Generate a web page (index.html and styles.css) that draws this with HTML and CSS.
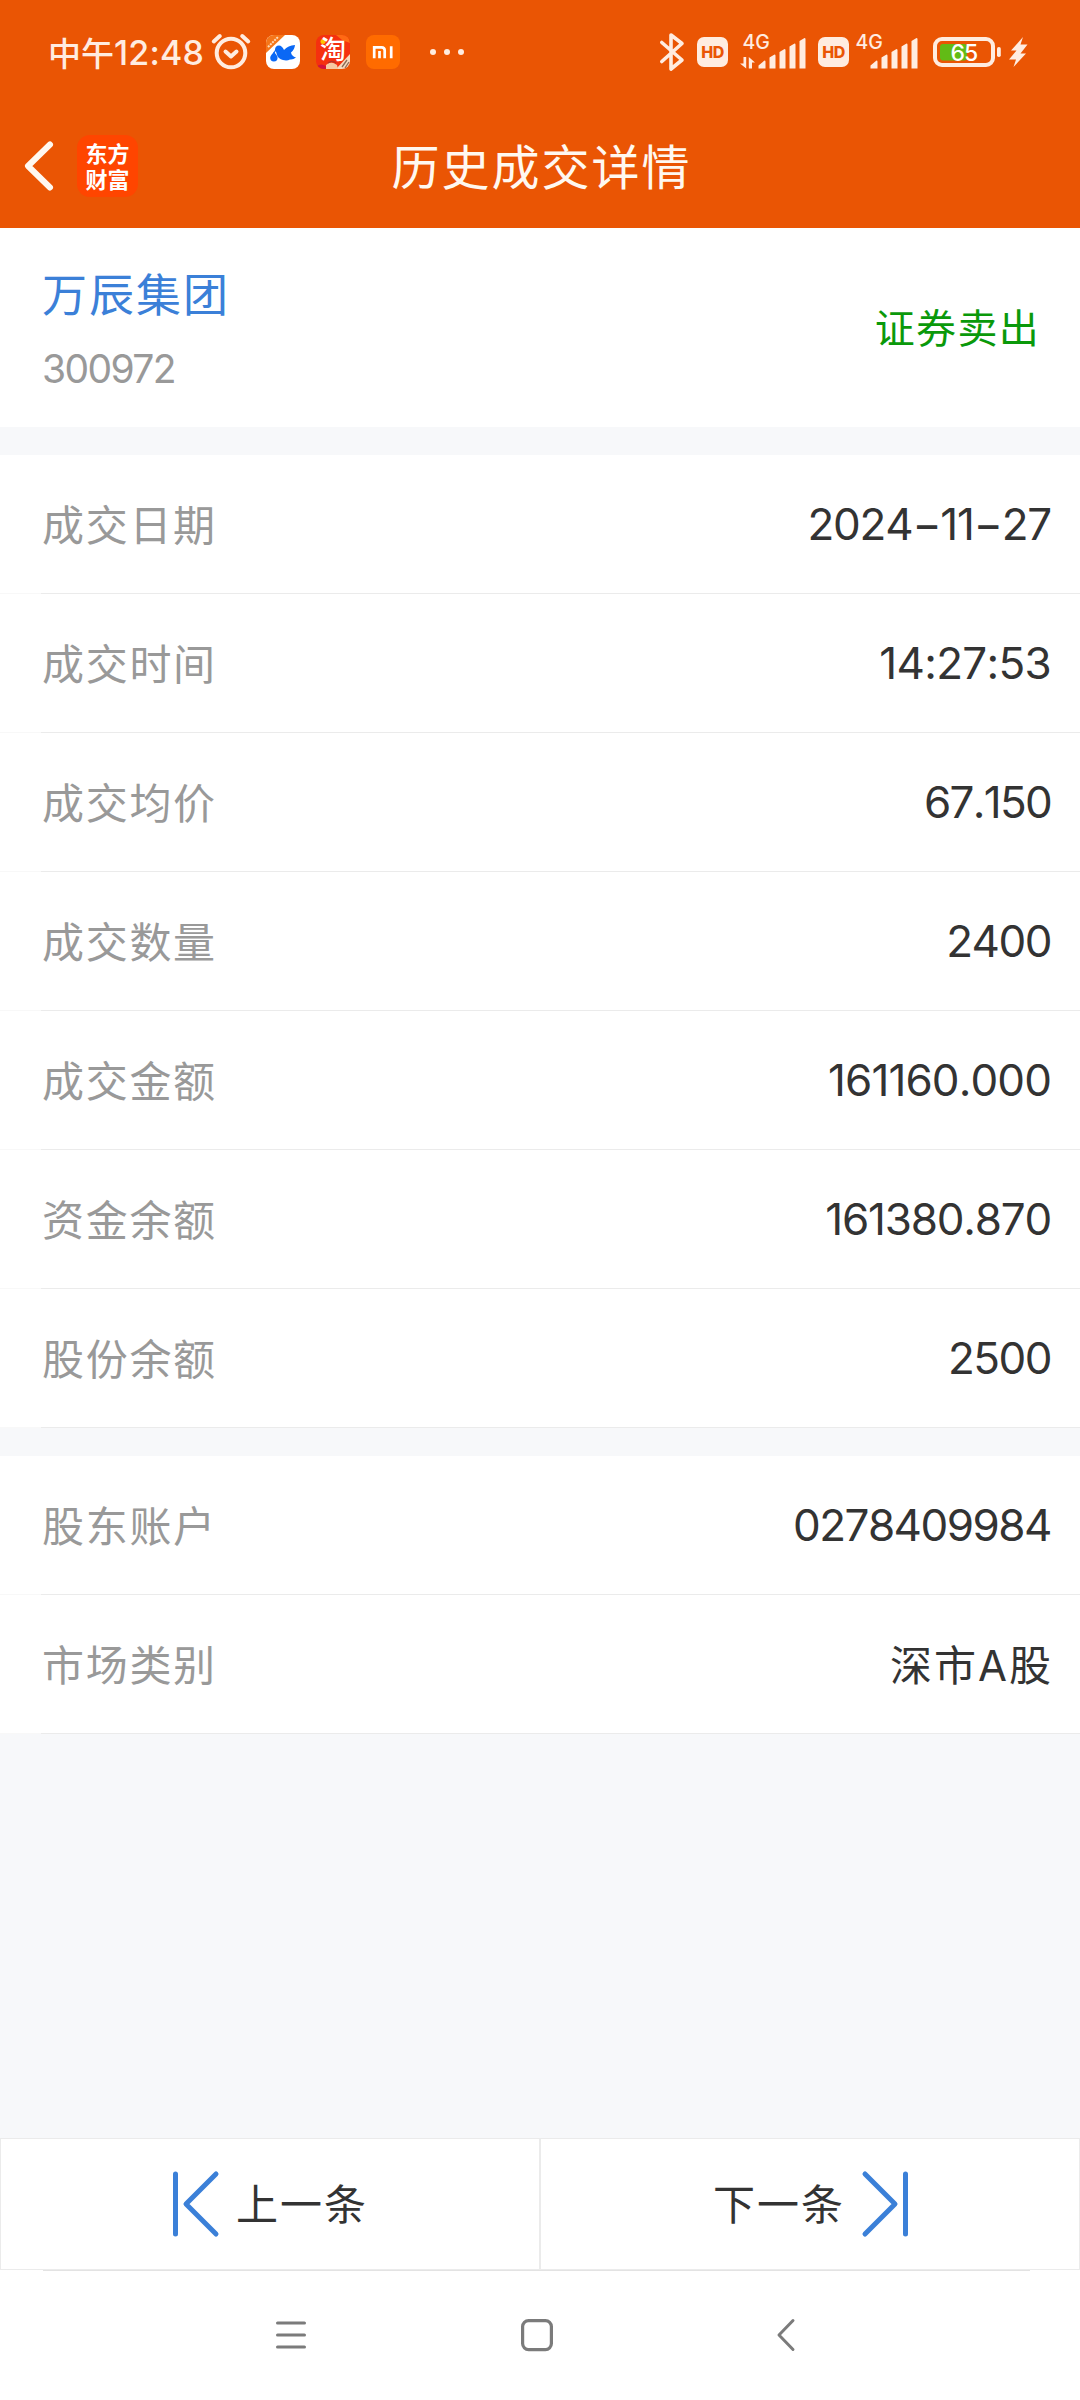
FILE: index.html
```html
<!DOCTYPE html>
<html lang="zh-CN">
<head>
    <meta charset="UTF-8">
    <meta name="viewport" content="width=device-width, initial-scale=1.0">
    <title>历史成交详情</title>
    <link rel="stylesheet" href="styles.css">
</head>
<body>

<div class="status-bar">
    <div class="status-left">
        <span class="time"><span class="time-cn">中午</span><span class="time-num">12:48</span></span>
        <svg class="alarm" width="40" height="40" viewBox="0 0 40 40" fill="none" stroke="#ffece0" stroke-width="4" stroke-linecap="round" stroke-linejoin="round">
            <circle cx="20" cy="21" r="14.3"/>
            <path d="M14.5 19.5l5.5 5 5.5-5"/>
            <path d="M2.8 9.5l6-5.5M37.2 9.5l-6-5.5"/>
        </svg>
        <svg class="app-icon" width="34" height="34" viewBox="0 0 34 34">
            <clipPath id="round"><rect width="34" height="34" rx="8"/></clipPath>
            <g clip-path="url(#round)">
                <rect width="34" height="34" fill="#fff"/>
                <path d="M0 0h19L0 18z" fill="#f5761a"/>
                <path d="M2 12L12 2" stroke="#ffd9b8" stroke-width="2" stroke-dasharray="2 1"/>
            </g>
            <path d="M9 15q0-4.500 4-4.500 3 0 5 4.500 4-4.500 11-5-.5 5-4 7.500.5 3.500 5 5-3 2.500-6 2-3 1.500-7 .5-5-1.500-6-5-.5-3-2-5z" fill="#0a68f5"/>
            <path d="M10 14.500L8 18" stroke="#0a68f5" stroke-width="1.300"/>
            <path d="M8 16.500c-1.500 2.500-3.800 4-3.800 6.200a3.700 3.700 0 0 0 7.400 0c0-2.200-2.200-3.700-3.600-6.200z" fill="#0a68f5"/>
        </svg>
        <svg class="app-icon" width="34" height="34" viewBox="0 0 34 34">
            <g clip-path="url(#round)">
                <rect width="34" height="34" fill="#f5300f"/>
                <path d="M20 0h12l2 8-8-3z" fill="#ff6a13"/>
                <path d="M34 19L20 34h14z" fill="#f7d9bd"/>
                <path d="M26 32l5-7M29 33l4-6" stroke="#8a6a55" stroke-width="1.300"/>
                <path d="M1 31q4-3 9 0v3H1z" fill="#d3123c"/>
                <path d="M10 30q5-5 11 0l1 4H10z" fill="#f6c9a2"/>
                <path d="M12 28q4-3 8 0" stroke="#b3342a" stroke-width="1.500" fill="none"/>
            </g>
            <circle cx="7" cy="6.500" r="2.500" fill="#ffc400"/>
            <text class="tao" x="4" y="24">淘</text>
        </svg>
        <svg class="app-icon" width="34" height="34" viewBox="0 0 34 34">
            <rect width="34" height="34" rx="8" fill="#ff6b00"/>
            <path d="M8.200 23.200V12.400h7.300q3.200 0 3.200 3.200v7.600M13.500 16v7.200M25.200 11.200v12" fill="none" stroke="#fff" stroke-width="2.700"/>
        </svg>
        <svg class="more" width="34" height="8" viewBox="0 0 34 8" fill="#ffece0">
            <circle cx="3" cy="4" r="3"/>
            <circle cx="17" cy="4" r="3"/>
            <circle cx="31" cy="4" r="3"/>
        </svg>
    </div>
    <div class="status-right">
        <svg width="24" height="40" viewBox="0 0 24 40" fill="none" stroke="#ffece0" stroke-width="3.600" stroke-linecap="round" stroke-linejoin="round">
            <path d="M1.800 10.500L22 28 11 37V3l11 8.500L1.800 29.500"/>
        </svg>
        <span class="hd">HD</span>
        <svg class="signal signal-1" width="66" height="40" viewBox="0 -2 66 40" fill="#ffece0">
            <text class="net" x="2.500" y="14.800">4G</text>
            <path d="M0 29.500h3.500V23h2.700v11.500L0 29.500zM8.800 34.500V23l6.200 5.500h-3v6z"/>
            <path d="M18.500 34.500v-3l6-5q1 0 1 1.200v6.800zM29.500 34.500V23.500l5-3q1 0 1 1.200v12.800zM39.500 34.500V18l5-3q1 0 1 1.200v18.300zM49.500 34.500V12.500l5-3q1 0 1 1.200v23.800zM59.500 34.500V7l5-3q1 0 1 1.200v29.300z"/>
        </svg>
        <span class="hd hd-2">HD</span>
        <svg class="signal signal-2" width="64" height="40" viewBox="0 -2 64 40" fill="#ffece0">
            <text class="net" x="0.500" y="14.800">4G</text>
            <path transform="translate(-3)" d="M18.500 34.500v-3l6-5q1 0 1 1.200v6.800zM29.500 34.500V23.500l5-3q1 0 1 1.200v12.800zM39.500 34.500V18l5-3q1 0 1 1.200v18.300zM49.500 34.500V12.500l5-3q1 0 1 1.200v23.800zM59.500 34.500V7l5-3q1 0 1 1.200v29.300z"/>
        </svg>
        <svg class="battery" width="68" height="32" viewBox="0 0 68 32">
            <rect x="2" y="3" width="58" height="26" rx="7" fill="none" stroke="#ffece0" stroke-width="4"/>
            <rect x="64" y="11" width="3.800" height="10" rx="1.800" fill="#ffece0"/>
            <rect x="7" y="8" width="27" height="16.500" rx="3" fill="#62bb16"/>
            <text class="level" x="17.500" y="25">65</text>
        </svg>
        <svg class="bolt" width="19" height="32" viewBox="0 0 19 32">
            <path d="M14 1L2 14.500h5.500L0 23.500h7L4.500 31 17 17.500h-5.500l7-9h-7z" fill="#ffece0"/>
        </svg>
    </div>
</div>

<div class="nav-bar">
    <div class="nav-side">
        <svg width="30" height="52" viewBox="0 0 30 52" fill="none" stroke="#fff8f0" stroke-width="6" stroke-linecap="round" stroke-linejoin="round">
            <path d="M26 4.500L4 26l22 21.500"/>
        </svg>
        <div class="logo">东方<br>财富</div>
    </div>
    <h1 class="title">历史成交详情</h1>
    <div class="nav-side"></div>
</div>

<div class="stock">
    <div>
        <div class="stock-name">万辰集团</div>
        <div class="stock-code">300972</div>
    </div>
    <div class="stock-type">证券卖出</div>
</div>

<div class="list">
    <div class="row"><span class="label">成交日期</span><span class="value v-date">2024−11−27</span></div>
    <div class="row"><span class="label">成交时间</span><span class="value v-time">14:27:53</span></div>
    <div class="row"><span class="label">成交均价</span><span class="value v-price">67.150</span></div>
    <div class="row"><span class="label">成交数量</span><span class="value">2400</span></div>
    <div class="row"><span class="label">成交金额</span><span class="value v-amount">161160.000</span></div>
    <div class="row"><span class="label">资金余额</span><span class="value v-balance">161380.870</span></div>
    <div class="row"><span class="label">股份余额</span><span class="value">2500</span></div>
</div>

<div class="list">
    <div class="row"><span class="label">股东账户</span><span class="value v-account">0278409984</span></div>
    <div class="row"><span class="label">市场类别</span><span class="value v-market">深市A股</span></div>
</div>

<div class="pager">
    <div class="pager-btn">
        <svg width="46" height="66" viewBox="0 0 46 66" fill="none" stroke="#3b80d8" stroke-width="5" stroke-linecap="round" stroke-linejoin="round">
            <path d="M2.500 3v60M43 3L13 33l30 30"/>
        </svg>
        <span class="pager-text">上一条</span>
    </div>
    <div class="pager-btn">
        <span class="pager-text">下一条</span>
        <svg width="46" height="66" viewBox="0 0 46 66" fill="none" stroke="#3b80d8" stroke-width="5" stroke-linecap="round" stroke-linejoin="round">
            <path d="M43.500 3v60M3 3l30 30L3 63"/>
        </svg>
    </div>
</div>

<div class="system-nav">
    <svg width="30" height="34" viewBox="0 0 30 34" stroke="#7b7b7b" stroke-width="3" stroke-linecap="round">
        <path d="M1.500 5h27M1.500 17h27M1.500 29h27"/>
    </svg>
    <svg class="home" width="32" height="34" viewBox="0 0 32 34" fill="none" stroke="#7b7b7b" stroke-width="3.200">
        <rect x="1.600" y="2.600" width="28.800" height="29" rx="6"/>
    </svg>
    <svg class="back" width="18" height="34" viewBox="0 0 18 34" fill="none" stroke="#7b7b7b" stroke-width="3" stroke-linecap="round" stroke-linejoin="round">
        <path d="M16 2.500L2 17l14 14.500"/>
    </svg>
</div>

</body>
</html>
```
FILE: styles.css
```css
* {
    box-sizing: border-box;
}
body {
    margin: 0;
    width: 1080px;
    height: 2400px;
    display: flex;
    flex-direction: column;
    background-color: #f7f8fa;
    font-family: Inter, "Noto Sans CJK SC", sans-serif;
    color: #333;
    overflow: hidden;
}
svg {
    display: block;
    flex: none;
    overflow: visible;
}

/* status bar */
.status-bar {
    height: 104px;
    padding: 0 52px 0 48px;
    display: flex;
    justify-content: space-between;
    background-color: #ea5504;
    color: #ffece0;
}
.status-left, .status-right {
    display: flex;
    align-items: center;
    height: 104px;
}
.time {
    width: 163px;
    display: flex;
    align-items: center;
    white-space: nowrap;
    font-weight: 500;
}
.time-cn {
    font-size: 33px;
}
.time-num {
    font-size: 34px;
    letter-spacing: 0.2px;
    padding-top: 1px;
}
.app-icon {
    margin-right: 16px;
}
.alarm {
    margin-right: 15px;
}
.more {
    margin-left: 14px;
}
.tao {
    font-size: 26px;
    font-weight: 500;
    fill: #fff;
}
.hd {
    width: 31px;
    height: 30px;
    margin-left: 13px;
    border-radius: 7px;
    background-color: #ffece0;
    color: #ea5504;
    font-size: 16px;
    font-weight: 800;
    line-height: 30px;
    letter-spacing: -0.5px;
    text-align: center;
}
.signal-1 {
    margin-left: 12px;
}
.hd-2 {
    margin-left: 12px;
}
.signal-2 {
    margin-left: 6px;
}
.net {
    font-size: 19.5px;
    font-weight: 500;
}
.battery {
    margin-left: 14px;
}
.level {
    font-size: 23px;
    font-weight: 500;
    letter-spacing: -1px;
    fill: #fff;
}
.bolt {
    margin-left: 8px;
}

/* title bar */
.nav-bar {
    height: 124px;
    padding: 0 24px;
    display: flex;
    align-items: center;
    background-color: #ea5504;
}
.nav-side {
    flex: 1;
    display: flex;
    align-items: center;
    gap: 23px;
}
.logo {
    width: 61px;
    height: 62px;
    padding-top: 4px;
    border-radius: 13px;
    background-color: #ff4500;
    color: #fff;
    font-family: "Noto Sans CJK SC", sans-serif;
    font-size: 22px;
    font-weight: 700;
    line-height: 26px;
    text-align: center;
}
.title {
    margin: 0 0 0 3px;
    padding-bottom: 4px;
    font-size: 48px;
    font-weight: 400;
    letter-spacing: 2px;
    color: #fff8f0;
}

/* stock header */
.stock {
    height: 199px;
    padding: 0 40px 0 42px;
    display: flex;
    justify-content: space-between;
    align-items: center;
    background-color: #fff;
}
.stock-name {
    margin-top: 4px;
    font-size: 45px;
    line-height: 66px;
    letter-spacing: 2px;
    color: #3b80d8;
}
.stock-code {
    margin-top: 12px;
    font-size: 39px;
    line-height: 56px;
    letter-spacing: -1.6px;
    color: #999;
}
.stock-type {
    padding-bottom: 4px;
    font-size: 40px;
    letter-spacing: 1.3px;
    color: #0a990a;
}

/* detail rows */
.list {
    margin-top: 28px;
}
.row {
    height: 139px;
    padding: 0 29px 0 42px;
    display: flex;
    justify-content: space-between;
    align-items: center;
    background: linear-gradient(to right, #f8f8f8 41px, #ebebeb 41px) bottom / 100% 1px no-repeat #fff;
}
.label {
    padding-bottom: 4px;
    font-size: 42px;
    letter-spacing: 1.7px;
    color: #999;
}
.value {
    padding-bottom: 1px;
    font-size: 44px;
    font-kerning: none;
    letter-spacing: -1.5px;
}
.v-date {
    letter-spacing: -1.2px;
}
.v-time {
    letter-spacing: -0.7px;
}
.v-price {
    letter-spacing: -1.7px;
}
.v-amount {
    letter-spacing: -0.9px;
}
.v-balance {
    letter-spacing: -1.2px;
}
.v-account {
    letter-spacing: -1.5px;
}
.v-market {
    margin-right: -2px;
    padding-bottom: 4px;
    font-size: 42px;
    letter-spacing: 2px;
}

/* prev / next */
.pager {
    height: 132px;
    margin-top: auto;
    display: flex;
    background-color: #fff;
}
.pager-btn {
    flex: 1;
    display: flex;
    justify-content: center;
    align-items: center;
    gap: 17px;
    padding-left: 1px;
    border: 1px solid #ebebeb;
    font-size: 42px;
    letter-spacing: 2px;
}
.pager-text {
    padding-bottom: 5px;
}

/* system buttons */
.system-nav {
    height: 130px;
    padding-left: 276px;
    display: flex;
    align-items: center;
    background: linear-gradient(#e3e3e3, #e3e3e3) 43px 0 / 987px 1px no-repeat #fff;
}
.home {
    margin-left: 215px;
}
.back {
    margin-left: 224px;
}
```
